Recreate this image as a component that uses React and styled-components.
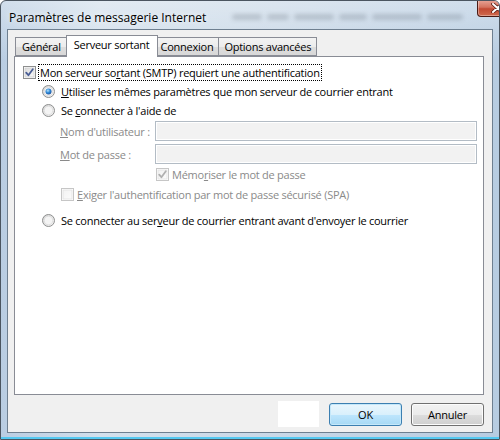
import React from 'react';
import styled, { createGlobalStyle } from 'styled-components';

const Global = createGlobalStyle`
  html, body { margin: 0; padding: 0; background: #fff; }
  body {
    width: 500px; height: 440px; overflow: hidden;
    font-family: "Open Sans", "Noto Sans", sans-serif;
    font-size: 11px; letter-spacing: -0.25px;
  }
  #root { width: 500px; height: 440px; }
`;

const Window = styled.div`
  width: 500px; height: 440px; box-sizing: border-box;
  display: flex; flex-direction: column;
  padding: 0 6px 6px 6px;
  border: 1px solid #4b5560;
  border-radius: 6px 6px 0 0;
  background:
    linear-gradient(180deg, rgba(255,255,255,0.35) 0px, rgba(255,255,255,0) 60px),
    linear-gradient(90deg, #b9cde2 0%, #d3e0ec 20%, #c9d8e7 55%, #b7cce1 100%);
  box-shadow: inset 0 -2px 0 #53c8f0;
  overflow: hidden;
`;

const TitleBar = styled.div`
  height: 28px; display: flex; align-items: flex-start; flex-shrink: 0;
`;

const Title = styled.div`
  font-size: 12px; color: #000; letter-spacing: 0;
  margin: 8px 0 0 2px; white-space: nowrap;
  text-shadow: 0 0 6px rgba(255,255,255,0.9);
`;

const Ghost = styled.div`
  flex: 1; display: flex; gap: 5px; margin: 13px 14px 0 26px; height: 6px;
  filter: blur(2.2px); opacity: 0.22;
`;

const Smudge = styled.div`
  height: 6px; background: #4b5560; border-radius: 3px;
  width: ${p => p.$w}px;
`;

const Close = styled.div`
  width: 41px; height: 17px; margin-top: -1px; flex-shrink: 0;
  box-sizing: border-box; border: 1px solid #4a1a14; border-top: none;
  border-radius: 0 0 4px 4px;
  background: linear-gradient(180deg, #e8a598 0%, #d4735f 45%, #c24a33 55%, #cf6a4e 100%);
  display: flex; align-items: center; justify-content: center;
  box-shadow: inset 0 0 0 1px rgba(255,255,255,0.35);
`;

const Client = styled.div`
  flex: 1; display: flex; flex-direction: column;
  background: #f0f0f0; border: 1px solid #6e7f90;
  padding: 5px 8px 0 6px;
`;

const TabStrip = styled.div`
  display: flex; align-items: flex-end; height: 21px; padding-left: 1px;
  position: relative; z-index: 1;
`;

const Tab = styled.div`
  box-sizing: border-box;
  height: ${p => (p.$active ? '22px' : '19px')};
  margin: ${p => (p.$active ? '0 -2px -1px -2px' : '0 0 0 -1px')};
  padding: ${p => (p.$active ? '1px 7px 0 7px' : '1px 5px 0 5px')};
  border: 1px solid #898c95;
  border-bottom: ${p => (p.$active ? 'none' : '1px solid #898c95')};
  background: ${p => (p.$active
    ? '#fff'
    : 'linear-gradient(180deg, #f3f3f3 0%, #ececec 50%, #dedede 51%, #d8d8d8 100%)')};
  position: relative; z-index: ${p => (p.$active ? 2 : 0)};
  line-height: 16px; color: #000; white-space: nowrap;
  &:first-child { margin-left: 0; padding: 1px 6px 0 6px; }
`;

const Panel = styled.div`
  height: 339px; box-sizing: border-box;
  border: 1px solid #898c95; background: #fff;
  padding: 6px 0 0 8px;
  display: flex; flex-direction: column;
`;

const Row = styled.div`
  display: flex; align-items: center; height: 19px;
  padding-left: ${p => p.$indent || 0}px;
  margin-top: ${p => p.$mt || 0}px;
  color: ${p => (p.$disabled ? '#8a8a8a' : '#000')};
  white-space: nowrap;
`;

const FieldRow = styled(Row)`
  height: 20px;
`;

const Label = styled.span`
  margin-left: ${p => p.$gap ?? 4}px;
  padding: 0 1px;
  border: 1px ${p => (p.$focus ? 'dotted #000' : 'solid transparent')};
  line-height: 15px;
`;

const FieldLabel = styled.span`
  width: 95px; flex-shrink: 0; color: #8a8a8a;
`;

const Input = styled.div`
  width: 322px; height: 20px; box-sizing: border-box;
  border: 1px solid #b3bcc5; background: #f2f2f2;
  box-shadow: inset 0 0 0 1px #fff;
`;

const Footer = styled.div`
  display: flex; justify-content: flex-end; align-items: center;
  gap: 9px; padding: 6px 0 0 0;
`;

const Blank = styled.div`
  width: 41px; height: 26px; background: #fff; margin-right: 1px;
`;

const Button = styled.div`
  width: 73px; height: 23px; box-sizing: border-box;
  border: 1px solid ${p => (p.$default ? '#3c7fb1' : '#707070')};
  border-radius: 3px;
  background: ${p => (p.$default
    ? 'linear-gradient(180deg, #eaf6fd 0%, #d9f0fc 50%, #bee6fd 51%, #a7d9f5 100%)'
    : 'linear-gradient(180deg, #f2f2f2 0%, #ebebeb 50%, #dddddd 51%, #cfcfcf 100%)')};
  box-shadow: inset 0 0 0 1px ${p => (p.$default ? '#c5e8fa' : '#fcfcfc')};
  display: flex; align-items: center; justify-content: center;
  color: #000;
`;

function CheckBox({ checked, disabled }) {
  const border = disabled ? '#c6c6c6' : '#8e8f8f';
  const mark = disabled ? '#b0b0b0' : '#4b5f96';
  const gid = `cb${disabled ? 'd' : 'n'}`;
  return (
    <svg width="13" height="13" viewBox="0 0 13 13" style={{ flexShrink: 0 }}>
      <defs>
        <linearGradient id={gid} x1="0" y1="0" x2="1" y2="1">
          <stop offset="0" stopColor={disabled ? '#f2f2f2' : '#dcdcdc'} />
          <stop offset="1" stopColor={disabled ? '#fbfbfb' : '#f8f8f8'} />
        </linearGradient>
      </defs>
      <rect x="0.5" y="0.5" width="12" height="12" fill="#fff" stroke={border} />
      <rect x="2" y="2" width="9" height="9" fill={`url(#${gid})`} stroke={disabled ? '#e2e2e2' : '#cfcfcf'} strokeWidth="0.8" />
      {checked && (
        <path d="M3.2 6.6 L5.4 9.2 L9.8 3.2" fill="none" stroke={mark} strokeWidth="1.8" strokeLinecap="round" strokeLinejoin="round" />
      )}
    </svg>
  );
}

function Radio({ checked }) {
  return (
    <svg width="13" height="13" viewBox="0 0 13 13" style={{ flexShrink: 0 }}>
      <defs>
        <linearGradient id="rbg" x1="0" y1="0" x2="1" y2="1">
          <stop offset="0" stopColor="#d4d4d4" />
          <stop offset="1" stopColor="#f7f7f7" />
        </linearGradient>
        <radialGradient id="rdot" cx="0.4" cy="0.35" r="0.7">
          <stop offset="0" stopColor="#b9e3fb" />
          <stop offset="0.5" stopColor="#2f8ad8" />
          <stop offset="1" stopColor="#1c4f9b" />
        </radialGradient>
      </defs>
      <circle cx="6.5" cy="6.5" r="6" fill="url(#rbg)" stroke="#8e8f8f" strokeWidth="1" />
      <circle cx="6.5" cy="6.5" r="4.3" fill="#f4f4f4" stroke="#dadada" strokeWidth="0.8" />
      {checked && <circle cx="6.5" cy="6.5" r="3" fill="url(#rdot)" />}
    </svg>
  );
}

export default function App() {
  return (
    <>
      <Global />
      <Window>
        <TitleBar>
          <Title>Paramètres de messagerie Internet</Title>
          <Ghost>
            <Smudge $w={30} /><Smudge $w={22} /><Smudge $w={40} /><Smudge $w={28} /><Smudge $w={50} /><Smudge $w={36} />
          </Ghost>
          <Close>
            <svg width="13" height="10" viewBox="0 0 13 10">
              <path d="M2 1 L11 9 M11 1 L2 9" stroke="#5a1c12" strokeWidth="3.6" strokeLinecap="round" />
              <path d="M2 1 L11 9 M11 1 L2 9" stroke="#fff" strokeWidth="2" strokeLinecap="round" />
            </svg>
          </Close>
        </TitleBar>
        <Client>
          <TabStrip>
            <Tab>Général</Tab>
            <Tab $active>Serveur sortant</Tab>
            <Tab>Connexion</Tab>
            <Tab>Options avancées</Tab>
          </TabStrip>
          <Panel>
            <Row>
              <CheckBox checked />
              <Label $gap={2} $focus>Mon serveur so<u>r</u>tant (SMTP) requiert une authentification</Label>
            </Row>
            <Row $indent={19}>
              <Radio checked />
              <Label><u>U</u>tiliser les mêmes paramètres que mon serveur de courrier entrant</Label>
            </Row>
            <Row $indent={19}>
              <Radio />
              <Label>Se <u>c</u>onnecter à l'aide de</Label>
            </Row>
            <FieldRow $indent={37} $mt={1}>
              <FieldLabel><u>N</u>om d'utilisateur :</FieldLabel>
              <Input />
            </FieldRow>
            <FieldRow $indent={37} $mt={3}>
              <FieldLabel><u>M</u>ot de passe :</FieldLabel>
              <Input />
            </FieldRow>
            <Row $indent={133} $mt={1} $disabled>
              <CheckBox checked disabled />
              <Label $gap={1}>Mémo<u>r</u>iser le mot de passe</Label>
            </Row>
            <Row $indent={38} $mt={1} $disabled>
              <CheckBox disabled />
              <Label $gap={1}><u>E</u>xiger l'authentification par mot de passe sécurisé (SPA)</Label>
            </Row>
            <Row $indent={19} $mt={7}>
              <Radio />
              <Label>Se connecter au ser<u>v</u>eur de courrier entrant avant d'envoyer le courrier</Label>
            </Row>
          </Panel>
          <Footer>
            <Blank />
            <Button $default>OK</Button>
            <Button>Annuler</Button>
          </Footer>
        </Client>
      </Window>
    </>
  );
}
